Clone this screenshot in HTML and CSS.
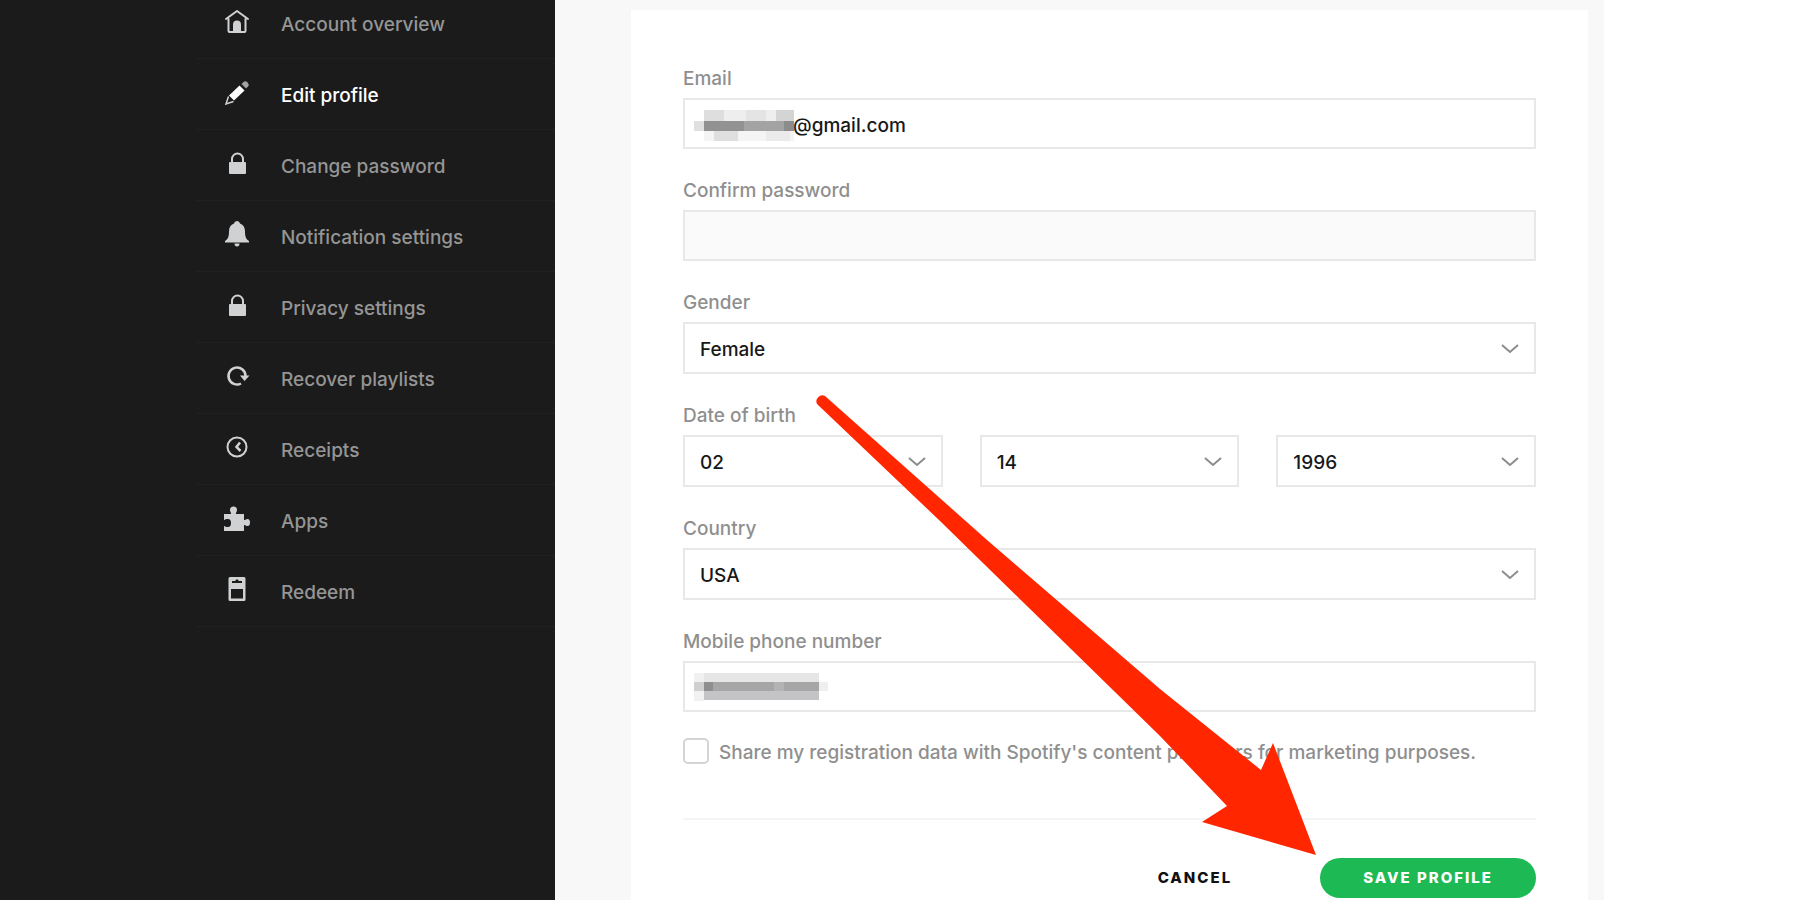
FILE: index.html
```html
<!DOCTYPE html>
<html lang="en">
<head>
    <meta charset="UTF-8">
    <title>Edit profile</title>
    <link rel="stylesheet" href="styles.css">
</head>
<body>
    <div class="page">
        <aside class="sidebar">
            <nav class="menu">
                <a href="#" class="menu-item">
                    <svg class="icon" viewBox="0 0 26 26" fill="none" stroke="currentColor" stroke-width="2" stroke-linejoin="round" stroke-linecap="round">
                        <path d="M2 11 13 3l11 8M4.500 11v12a1 1 0 0 0 1 1h15a1 1 0 0 0 1-1V11"/>
                        <path d="M10 23v-6.500a3 3 0 0 1 6 0V23z" fill="currentColor"/>
                    </svg>
                    Account overview
                </a>
                <a href="#" class="menu-item active">
                    <svg class="icon" viewBox="0 0 26 26" fill="currentColor">
                        <path d="M15.500 6.500l5 5L10 21.500l-5-5z"/>
                        <path d="M17.500 5l2-2q2-1.500 4 .500t.500 4l-2 2z" opacity=".6"/>
                        <path d="M4.500 17.500L2 25l7.500-2.500" fill="none" stroke="currentColor" stroke-width="1.500" opacity=".8"/>
                    </svg>
                    Edit profile
                </a>
                <a href="#" class="menu-item">
                    <svg class="icon" viewBox="0 0 26 26">
                        <rect x="5" y="12" width="17" height="12" rx="1" fill="currentColor"/>
                        <path d="M8 12V9a5.500 5.500 0 0 1 11 0v3" fill="none" stroke="currentColor" stroke-width="2"/>
                    </svg>
                    Change password
                </a>
                <a href="#" class="menu-item">
                    <svg class="icon" viewBox="0 0 26 26" fill="currentColor">
                        <path d="M13 0a3 3 0 0 1 3 2.500c3.500 1.500 5 4 5 8 0 5 1 7.500 4 9.500v1.500H1V20c3-2 4-4.500 4-9.500 0-4 1.500-6.500 5-8A3 3 0 0 1 13 0z"/>
                        <path d="M10.500 22.500h5a2.500 3 0 0 1-5 0z"/>
                    </svg>
                    Notification settings
                </a>
                <a href="#" class="menu-item">
                    <svg class="icon" viewBox="0 0 26 26">
                        <rect x="5" y="12" width="17" height="12" rx="1" fill="currentColor"/>
                        <path d="M8 12V9a5.500 5.500 0 0 1 11 0v3" fill="none" stroke="currentColor" stroke-width="2"/>
                    </svg>
                    Privacy settings
                </a>
                <a href="#" class="menu-item">
                    <svg class="icon" viewBox="0 0 26 26">
                        <path d="M17 20.500A8.500 8.500 0 1 1 21.500 13" fill="none" stroke="currentColor" stroke-width="2.500"/>
                        <path d="M16 12.500h9.500L20.500 18z" fill="currentColor"/>
                    </svg>
                    Recover playlists
                </a>
                <a href="#" class="menu-item">
                    <svg class="icon" viewBox="0 0 26 26" fill="none" stroke="currentColor">
                        <circle cx="13" cy="13" r="9.500" stroke-width="2"/>
                        <path d="M16 8.500 12.500 13l4 4" stroke-width="2.500"/>
                    </svg>
                    Receipts
                </a>
                <a href="#" class="menu-item">
                    <svg class="icon" viewBox="0 0 26 26" fill="currentColor">
                        <path d="M0 9h7c.5-1-1-2-1-4a3.500 3.500 0 0 1 7 0c0 2-1.500 3-1 4h8v6c1.500.5 1.500-1 3.500-1q2.500 0 2.500 3.500t-2.500 3.500c-2 0-2-1.500-3.500-1v6H0v-5c1 .5 2 1 4 1q3 0 3-4t-3-4c-2 0-3 .5-4 1z"/>
                    </svg>
                    Apps
                </a>
                <a href="#" class="menu-item">
                    <svg class="icon" viewBox="0 0 26 26">
                        <path fill-rule="evenodd" fill="currentColor" d="M6 1h14a1.500 1.500 0 0 1 1.500 1.500v21A1.500 1.500 0 0 1 20 25H6a1.500 1.500 0 0 1-1.500-1.500v-21A1.500 1.500 0 0 1 6 1zM7 13v9.500h12V13zM8 5v2h10V5h-3l-2-2-2 2z"/>
                    </svg>
                    Redeem
                </a>
            </nav>
        </aside>

        <main class="content">
            <form class="card">
                <div class="field">
                    <label for="email">Email</label>
                    <div class="control">
                        <input type="text" id="email" class="email-input" value="@gmail.com">
                        <!-- hidden part of the address -->
                        <svg class="mask" width="100" height="32" shape-rendering="crispEdges">
                            <rect x="10" width="90" height="11" fill="#eeeeee"/>
                            <rect x="10" width="20" height="11" fill="#dedede"/>
                            <rect x="52" width="20" height="11" fill="#e4e4e4"/>
                            <rect x="82" width="18" height="11" fill="#d4d4d4"/>
                            <rect y="11" width="10" height="10" fill="#e0e0e0"/>
                            <rect x="10" y="11" width="40" height="10" fill="#929292"/>
                            <rect x="50" y="11" width="40" height="10" fill="#a3a3a3"/>
                            <rect x="90" y="11" width="10" height="10" fill="#8c8c8c"/>
                            <rect x="10" y="21" width="90" height="10" fill="#f4f4f4"/>
                            <rect x="20" y="21" width="24" height="10" fill="#dfdfdf"/>
                            <rect x="72" y="21" width="24" height="10" fill="#ebebeb"/>
                        </svg>
                    </div>
                </div>

                <div class="field">
                    <label for="password">Confirm password</label>
                    <input type="password" id="password" class="password-input">
                </div>

                <div class="field">
                    <label for="gender">Gender</label>
                    <div class="control">
                        <select id="gender"><option>Female</option></select>
                        <svg class="chevron" viewBox="0 0 18 10"><path d="M1 1l8 7 8-7"/></svg>
                    </div>
                </div>

                <div class="field">
                    <label for="month">Date of birth</label>
                    <div class="date-row">
                        <div class="control">
                            <select id="month"><option>02</option></select>
                            <svg class="chevron" viewBox="0 0 18 10"><path d="M1 1l8 7 8-7"/></svg>
                        </div>
                        <div class="control">
                            <select id="day" aria-label="Day"><option>14</option></select>
                            <svg class="chevron" viewBox="0 0 18 10"><path d="M1 1l8 7 8-7"/></svg>
                        </div>
                        <div class="control">
                            <select id="year" aria-label="Year"><option>1996</option></select>
                            <svg class="chevron" viewBox="0 0 18 10"><path d="M1 1l8 7 8-7"/></svg>
                        </div>
                    </div>
                </div>

                <div class="field">
                    <label for="country">Country</label>
                    <div class="control">
                        <select id="country"><option>USA</option></select>
                        <svg class="chevron" viewBox="0 0 18 10"><path d="M1 1l8 7 8-7"/></svg>
                    </div>
                </div>

                <div class="field">
                    <label for="phone">Mobile phone number</label>
                    <div class="control">
                        <input type="tel" id="phone">
                        <!-- hidden phone number -->
                        <svg class="mask" width="136" height="28" shape-rendering="crispEdges">
                            <rect width="10" height="28" fill="#f1f1f1"/>
                            <rect x="10" width="115" height="9" fill="#e6e6e6"/>
                            <rect y="9" width="10" height="9" fill="#cfcfcf"/>
                            <rect x="10" y="9" width="115" height="9" fill="#a6a6a6"/>
                            <rect x="10" y="9" width="9" height="9" fill="#8f8f8f"/>
                            <rect x="80" y="9" width="10" height="9" fill="#b3b3b3"/>
                            <rect x="10" y="18" width="115" height="9" fill="#c4c4c6"/>
                            <rect x="125" y="9" width="9" height="9" fill="#efefef"/>
                        </svg>
                    </div>
                </div>

                <div class="consent">
                    <input type="checkbox" id="share">
                    <label for="share">Share my registration data with Spotify's content providers for marketing purposes.</label>
                </div>

                <div class="actions">
                    <button type="button" class="button button-plain">CANCEL</button>
                    <button type="submit" class="button button-green">SAVE PROFILE</button>
                </div>

                <svg class="arrow" viewBox="0 0 502 464" aria-hidden="true">
                    <path d="M9 2A6 6 0 0 0 1 10L123 126 344 342 411 412 386 428 500 461 457 349 445 376 344 295 171 146z"/>
                </svg>
            </form>
        </main>
    </div>
</body>
</html>
```
FILE: styles.css
```css
* {
    box-sizing: border-box;
}
body {
    margin: 0;
    background: #fff;
    font-family: Inter, "Liberation Sans", sans-serif;
    font-size: 19px;
    font-weight: 500;
    line-height: 24px;
}
.page {
    display: grid;
    grid-template-columns: minmax(0, 1fr) 359px minmax(0, 1049px) minmax(0, 1fr);
    min-height: 100vh;
    overflow: hidden;
}

/* sidebar */
.sidebar {
    grid-column: 1 / 3;
    display: flex;
    justify-content: flex-end;
    background: #1b1b1b;
}
.menu {
    width: 359px;
    margin-top: -12px;
}
.menu-item {
    display: flex;
    align-items: center;
    gap: 31px;
    height: 71px;
    padding-top: 4px;
    padding-left: 28px;
    border-bottom: 1px solid #212121;
    color: #959595;
    text-decoration: none;
}
.menu-item.active {
    color: #fff;
}
.icon {
    width: 26px;
    height: 26px;
    margin-bottom: 8px;
    color: #cfd1d2;
}
.active .icon {
    color: #fff;
}

/* form */
.content {
    display: flex;
    padding: 10px 16px 0 76px;
    background: #f8f8f8;
}
.card {
    position: relative;
    flex: 1;
    min-width: 0;
    padding: 57px 52px 3px;
    background: #fff;
}
.field {
    margin-bottom: 30px;
}
.field label {
    display: block;
    margin-bottom: 7px;
    color: #8f8f8f;
}
.control {
    position: relative;
}
.field input,
.field select {
    display: block;
    width: 100%;
    height: 51px;
    padding: 3px 15px 0;
    border: 2px solid #e8e8e8;
    border-radius: 0;
    background: #fff;
    color: #181818;
    font: inherit;
    appearance: none;
}
.field select {
    height: 52px;
}
.field .email-input {
    padding-left: 108px;
}
.field .password-input {
    background: #fafafa;
}
.mask {
    position: absolute;
    top: 12px;
    left: 11px;
}
.chevron {
    position: absolute;
    top: 22px;
    right: 17px;
    width: 18px;
    height: 10px;
    fill: none;
    stroke: #8c8c8c;
    stroke-width: 2;
    pointer-events: none;
}
.date-row {
    display: grid;
    grid-template-columns: repeat(3, 1fr);
    gap: 37px;
}
.consent {
    display: flex;
    align-items: center;
    gap: 10px;
    margin-top: -5px;
    padding-bottom: 53px;
    border-bottom: 2px solid #f4f4f4;
    color: #8f8f8f;
}
.consent label {
    padding-top: 4px;
}
.consent input {
    flex: none;
    width: 26px;
    height: 26px;
    margin: 0;
    border: 2px solid #d4d4d4;
    border-radius: 5px;
    background: #fff;
    appearance: none;
}

/* buttons */
.actions {
    display: flex;
    justify-content: flex-end;
    gap: 45px;
    margin-top: 38px;
}
.button {
    height: 40px;
    padding: 0 43px;
    border: none;
    border-radius: 20px;
    font: inherit;
    font-size: 15px;
    font-weight: 800;
    letter-spacing: 2px;
    cursor: pointer;
}
.button-plain {
    background: none;
    color: #111;
}
.button-green {
    background: #1db954;
    color: #fff;
}

/* pointer to the save button */
.arrow {
    position: absolute;
    top: 384px;
    left: 185px;
    width: 502px;
    height: 464px;
    fill: #ff2600;
    pointer-events: none;
}
```
